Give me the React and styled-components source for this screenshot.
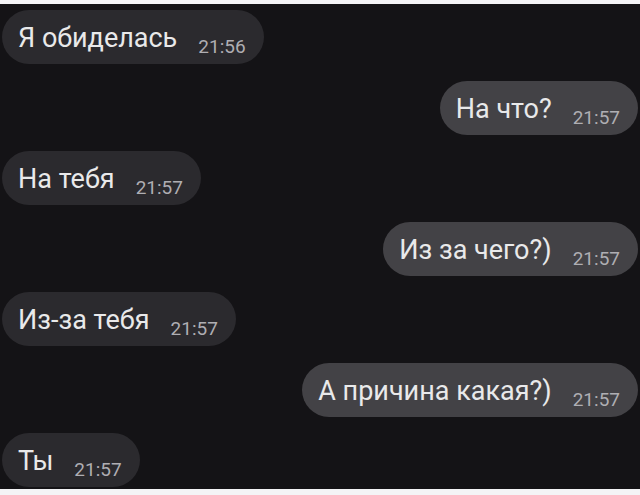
import React from 'react'
import styled, { createGlobalStyle } from 'styled-components'

const COLORS = {
  page: '#f4f4f6',
  chat: '#141316',
  incoming: '#2b2a2e',
  outgoing: '#434246',
  text: '#e9e9ea',
  time: '#afaeb3',
}

const MESSAGES = [
  { id: 1, text: 'Я обиделась', time: '21:56', out: false },
  { id: 2, text: 'На что?', time: '21:57', out: true },
  { id: 3, text: 'На тебя', time: '21:57', out: false },
  { id: 4, text: 'Из за чего?)', time: '21:57', out: true },
  { id: 5, text: 'Из-за тебя', time: '21:57', out: false },
  { id: 6, text: 'А причина какая?)', time: '21:57', out: true },
  { id: 7, text: 'Ты', time: '21:57', out: false },
]

const GlobalStyle = createGlobalStyle`
  html, body {
    margin: 0;
    padding: 0;
    background: ${COLORS.page};
  }
  body {
    font-family: Roboto, "Noto Sans", sans-serif;
  }
`

const App = () => {
  return (
    <>
      <GlobalStyle />
      <Screen>
        <Chat>
          {MESSAGES.map((m) => (
            <Bubble key={m.id} $out={m.out}>
              <Text>{m.text}</Text>
              <Time>{m.time}</Time>
            </Bubble>
          ))}
        </Chat>
      </Screen>
    </>
  )
}

const Screen = styled.div`
  width: 640px;
  height: 495px;
  padding: 4px 0 6px;
  box-sizing: border-box;
`

const Chat = styled.div`
  height: 100%;
  background: ${COLORS.chat};
  display: flex;
  flex-direction: column;
  gap: 16.5px;
  padding: 6px 2px 0 2px;
  box-sizing: border-box;
`

const Bubble = styled.div`
  align-self: ${(p) => (p.$out ? 'flex-end' : 'flex-start')};
  height: 54px;
  box-sizing: border-box;
  padding: 2px 18px 0 16px;
  border-radius: 27px;
  background: ${(p) => (p.$out ? COLORS.outgoing : COLORS.incoming)};
  line-height: 52px;
  font-size: 27px;
  white-space: nowrap;
`

const Text = styled.span`
  color: ${COLORS.text};
  font-size: 27px;
`

const Time = styled.span`
  display: inline-block;
  margin-left: 21px;
  font-size: 19px;
  line-height: 1;
  vertical-align: -6px;
  color: ${COLORS.time};
`

export default App
